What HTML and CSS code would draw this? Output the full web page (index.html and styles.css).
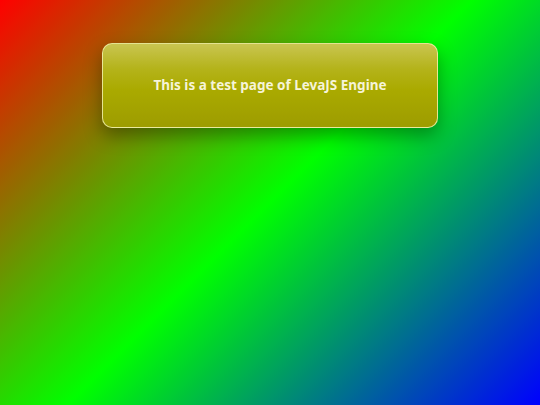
FILE: index.html
```html
<!DOCTYPE html>
<html>
<head>
<meta charset="utf-8">
<link rel="stylesheet" href="styles.css">
</head>
<body>
<div class="page">
  <div class="card">This is a test page of LevaJS Engine</div>
</div>
</body>
</html>
```

FILE: styles.css
```css
html, body {
  margin: 0;
  padding: 0;
  height: 100%;
}
body {
  background: linear-gradient(135deg, #ff0000 0%, #00ff00 50%, #0000ff 100%);
  font-family: "Noto Sans", "Open Sans", sans-serif;
}
.page {
  display: flex;
  justify-content: center;
  padding-top: 43px;
}
.card {
  box-sizing: border-box;
  width: 336px;
  height: 85px;
  padding-bottom: 1px;
  border: 1px solid rgba(240, 240, 170, 0.85);
  border-radius: 10px;
  background: linear-gradient(to bottom, #c9c550 0%, #b4b31a 30%, #aaaa00 55%, #9d9c00 100%);
  box-shadow: 0 8px 18px rgba(0, 0, 0, 0.35);
  display: flex;
  align-items: center;
  justify-content: center;
  color: #f6f4d8;
  font-weight: bold;
  font-size: 13.5px;
}
```
